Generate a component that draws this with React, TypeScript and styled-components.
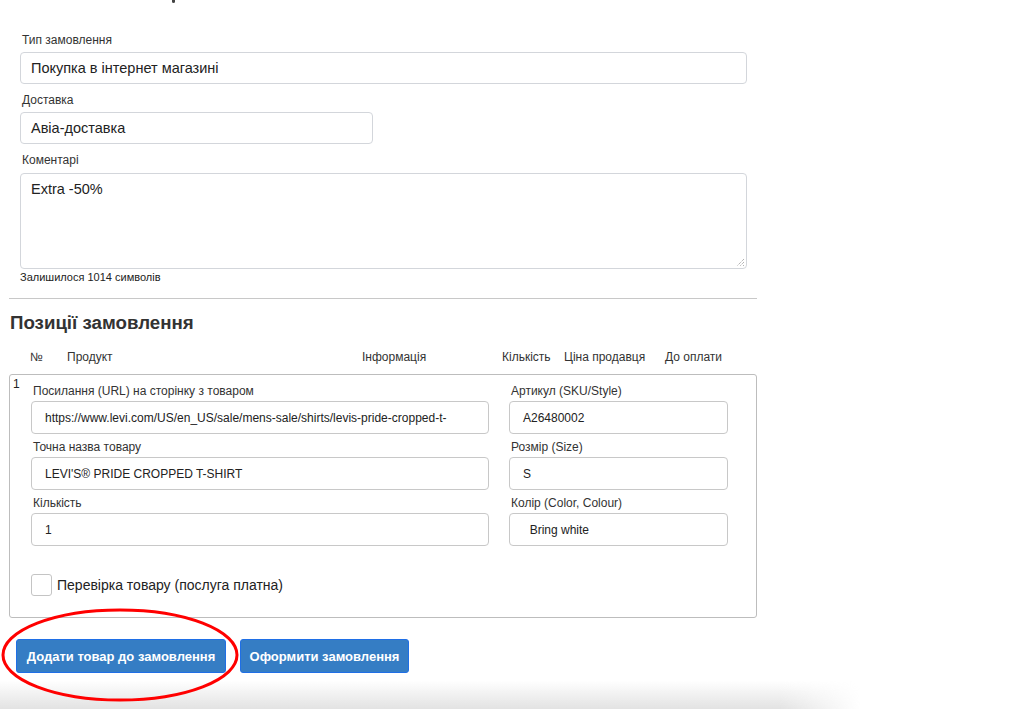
import React from 'react';
import styled, { createGlobalStyle } from 'styled-components';

const GlobalStyle = createGlobalStyle`
	html, body {
		margin: 0;
		padding: 0;
		background: #fff;
		font-family: 'Liberation Sans', Arial, sans-serif;
		color: #333;
	}
`;

const Page = styled.div`
	position: relative;
	width: 1015px;
	height: 709px;
	overflow: hidden;
	background: #fff;
`;

const Content = styled.div`
	width: 748px;
	padding: 33px 0 0 9px;
	display: flex;
	flex-direction: column;
`;

const OrderFields = styled.div`
	display: flex;
	flex-direction: column;
	padding-left: 11px;
`;

const Field = styled.div<{ $width?: number }>`
	display: flex;
	flex-direction: column;
	width: ${p => (p.$width ? `${p.$width}px` : '727px')};
	margin-bottom: 9px;
`;

const Label = styled.label`
	font-size: 12px;
	color: #333;
	line-height: 15px;
	margin-left: 2px;
	margin-bottom: 4px;
`;

const TopInput = styled.div`
	box-sizing: border-box;
	height: 32px;
	border: 1px solid #d3d6db;
	border-radius: 4px;
	padding: 0 10px;
	display: flex;
	align-items: center;
	font-size: 14.5px;
	color: #222;
`;

const TextArea = styled.div`
	position: relative;
	box-sizing: border-box;
	height: 96px;
	margin-top: 1px;
	border: 1px solid #d3d6db;
	border-radius: 4px;
	padding: 7px 10px;
	font-size: 14.5px;
	color: #222;
`;

const ResizeGrip = styled.svg`
	position: absolute;
	right: 1px;
	bottom: 1px;
`;

const Counter = styled.div`
	font-size: 11px;
	color: #222;
	margin-top: 2px;
`;

const Divider = styled.hr`
	width: 748px;
	margin: 6px 0 0 -11px;
	border: none;
	border-top: 1px solid #c8c8c8;
`;

const SectionTitle = styled.h3`
	margin: 13px 0 0 1px;
	font-size: 18.7px;
	font-weight: bold;
	color: #333;
	line-height: 22px;
`;

const TableHead = styled.div`
	display: grid;
	grid-template-columns: 37px 295px 140px 62px 101px auto;
	padding-left: 21px;
	margin-top: 16px;
	font-size: 12px;
	color: #333;
	line-height: 15px;
`;

const ItemBox = styled.div`
	box-sizing: border-box;
	margin-top: 9px;
	width: 748px;
	height: 244px;
	border: 1px solid #bdbdbd;
	border-radius: 3px;
	display: flex;
	padding: 2px 0 0 3px;
`;

const ItemIndex = styled.div`
	width: 18px;
	font-size: 12px;
	color: #222;
`;

const ItemColumns = styled.div`
	display: grid;
	grid-template-columns: 458px 219px;
	column-gap: 20px;
	align-items: start;
`;

const ItemColumn = styled.div`
	display: flex;
	flex-direction: column;
	padding-top: 7px;
`;

const ItemField = styled.div`
	display: flex;
	flex-direction: column;
	margin-bottom: 6px;
`;

const ItemLabel = styled.div`
	font-size: 12px;
	color: #333;
	line-height: 15px;
	margin: 0 0 2px 2px;
`;

const ItemInput = styled.div`
	box-sizing: border-box;
	height: 33px;
	border: 1px solid #c8c8c8;
	border-radius: 4px;
	padding: 0 13px;
	display: flex;
	align-items: center;
	font-size: 12px;
	color: #222;
	white-space: pre;
	overflow: hidden;
`;

const CheckRow = styled.div`
	display: flex;
	align-items: center;
	gap: 5px;
	margin-top: 22px;
	font-size: 14px;
	color: #222;
`;

const CheckBox = styled.span`
	box-sizing: border-box;
	width: 21px;
	height: 22px;
	border: 1px solid #c4c4c4;
	border-radius: 3px;
	background: #fff;
`;

const Actions = styled.div`
	display: flex;
	gap: 14px;
	margin: 21px 0 0 7px;
`;

const PrimaryButton = styled.button<{ $width: number }>`
	box-sizing: border-box;
	width: ${p => p.$width}px;
	height: 34px;
	background: #357dc4;
	border: 1px solid #1f6fe6;
	border-radius: 3px;
	color: #fff;
	font-family: 'Liberation Sans', Arial, sans-serif;
	font-size: 13px;
	font-weight: bold;
	padding: 0;
`;

const Highlight = styled.svg`
	position: absolute;
	left: 0;
	top: 606px;
	pointer-events: none;
`;

const BottomShade = styled.div`
	position: absolute;
	left: 0;
	right: 0;
	bottom: 0;
	height: 28px;
	background: linear-gradient(to bottom, rgba(225, 225, 225, 0), #e2e2e2);
	-webkit-mask-image: linear-gradient(to right, #000 0, #000 780px, transparent 860px);
	mask-image: linear-gradient(to right, #000 0, #000 780px, transparent 860px);
	pointer-events: none;
`;

const TopCut = styled.div`
	position: absolute;
	left: 172px;
	top: 0;
	width: 3px;
	height: 3px;
	border-radius: 0 0 2px 2px;
	background: #444;
`;

const App: React.FC = () => {
	return (
		<Page>
			<GlobalStyle />
			<TopCut />
			<Content>
				<OrderFields>
					<Field>
						<Label>Тип замовлення</Label>
						<TopInput>Покупка в інтернет магазині</TopInput>
					</Field>
					<Field $width={353}>
						<Label>Доставка</Label>
						<TopInput>Авіа-доставка</TopInput>
					</Field>
					<Field>
						<Label>Коментарі</Label>
						<TextArea>
							Extra -50%
							<ResizeGrip width="9" height="9" viewBox="0 0 9 9">
								<path d="M8 1 L1 8 M8 4 L4 8 M8 7 L7 8" stroke="#777" strokeWidth="0.8" strokeDasharray="1 1" />
							</ResizeGrip>
						</TextArea>
						<Counter>Залишилося 1014 символів</Counter>
					</Field>
					<Divider />
				</OrderFields>
				<SectionTitle>Позиції замовлення</SectionTitle>
				<TableHead>
					<span>№</span>
					<span>Продукт</span>
					<span>Інформація</span>
					<span>Кількість</span>
					<span>Ціна продавця</span>
					<span>До оплати</span>
				</TableHead>
				<ItemBox>
					<ItemIndex>1</ItemIndex>
					<ItemColumns>
						<ItemColumn>
							<ItemField>
								<ItemLabel>Посилання (URL) на сторінку з товаром</ItemLabel>
								<ItemInput>https://www.levi.com/US/en_US/sale/mens-sale/shirts/levis-pride-cropped-t-</ItemInput>
							</ItemField>
							<ItemField>
								<ItemLabel>Точна назва товару</ItemLabel>
								<ItemInput>LEVI'S® PRIDE CROPPED T-SHIRT</ItemInput>
							</ItemField>
							<ItemField>
								<ItemLabel>Кількість</ItemLabel>
								<ItemInput>1</ItemInput>
							</ItemField>
							<CheckRow>
								<CheckBox />
								Перевірка товару (послуга платна)
							</CheckRow>
						</ItemColumn>
						<ItemColumn>
							<ItemField>
								<ItemLabel>Артикул (SKU/Style)</ItemLabel>
								<ItemInput>A26480002</ItemInput>
							</ItemField>
							<ItemField>
								<ItemLabel>Розмір (Size)</ItemLabel>
								<ItemInput>S</ItemInput>
							</ItemField>
							<ItemField>
								<ItemLabel>Колір (Color, Colour)</ItemLabel>
								<ItemInput>{'  Bring white'}</ItemInput>
							</ItemField>
						</ItemColumn>
					</ItemColumns>
				</ItemBox>
				<Actions>
					<PrimaryButton $width={210}>Додати товар до замовлення</PrimaryButton>
					<PrimaryButton $width={169}>Оформити замовлення</PrimaryButton>
				</Actions>
			</Content>
			<BottomShade />
			<Highlight width="245" height="100" viewBox="0 0 245 100">
				<ellipse cx="120" cy="49" rx="117" ry="45" fill="none" stroke="#f00" strokeWidth="3" />
			</Highlight>
		</Page>
	);
};

export default App;
